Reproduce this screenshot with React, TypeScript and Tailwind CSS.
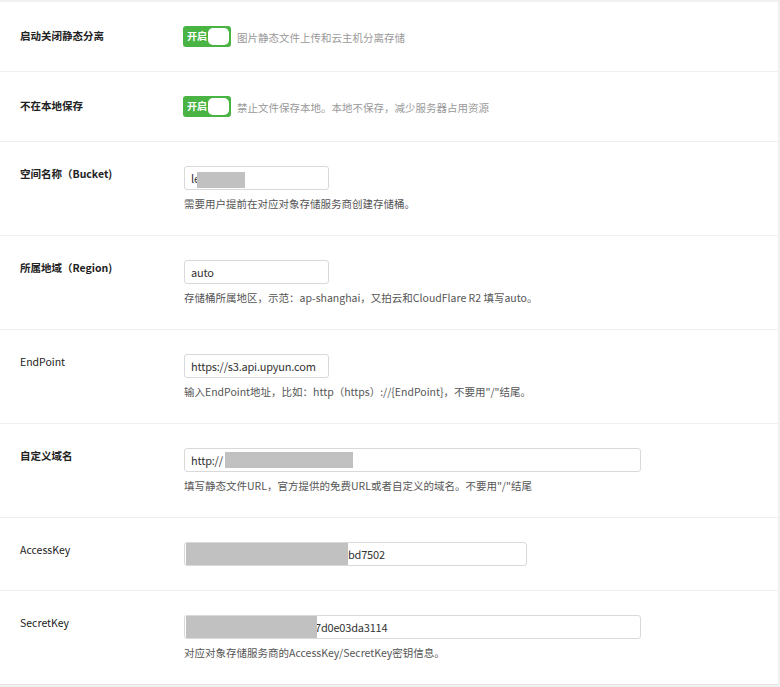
import React from 'react';

const font = { fontFamily: '"Noto Sans CJK SC", "Noto Sans", sans-serif' };

const Toggle = () => (
  <div className="flex items-center w-[48px] h-[21px] rounded-[3px] bg-[#49b443] pl-[4px] pr-[2px]">
    <span className="text-[10px] leading-none font-bold text-white">开启</span>
    <span className="ml-auto w-[21px] h-[17px] rounded-[5px] bg-white" />
  </div>
);

const Field = ({
  width,
  children,
}: {
  width: string;
  children: React.ReactNode;
}) => (
  <div
    className={`relative flex items-center h-[24px] ${width} border border-[#d9d9d9] rounded-[3px] bg-white pl-[6px] text-[11px] tracking-[-0.2px] text-[#333] whitespace-nowrap`}
  >
    {children}
  </div>
);

const Blur = ({ className }: { className: string }) => (
  <span className={`absolute bg-[#c1c1c1] ${className}`} />
);

const SwitchRow = ({ label, help }: { label: string; help: string }) => (
  <div className="flex items-center h-[70px] border-b border-[#f0f0f0] pb-[1px]">
    <div className="w-[183px] pl-[20px] text-[10.5px] font-bold text-[#222]">{label}</div>
    <Toggle />
    <div className="ml-[6px] mt-[3px] text-[10.5px] text-[#999]">{help}</div>
  </div>
);

const InputRow = ({
  label,
  help,
  last,
  plain,
  children,
}: {
  label: string;
  help?: string;
  last?: boolean;
  plain?: boolean;
  children: React.ReactNode;
}) => (
  <div
    className={`flex pt-[24px] ${help ? 'pb-[23px]' : 'pb-[24px]'} ${last ? '' : 'border-b border-[#f0f0f0]'}`}
  >
    <div
      className={`w-[184px] pl-[20px] text-[10.5px] leading-[16px] text-[#222] ${plain ? 'font-normal' : 'font-bold'}`}
    >
      {label}
    </div>
    <div className="flex flex-col">
      {children}
      {help && <div className="mt-[6px] text-[10.5px] leading-[16px] text-[#555]">{help}</div>}
    </div>
  </div>
);

export default function App() {
  return (
    <div className="min-h-[687px] bg-[#f1f1f1] pt-[2px]" style={font}>
      <div className="w-[778px] bg-white border-b border-[#e5e5e5]">
        <SwitchRow label="启动关闭静态分离" help="图片静态文件上传和云主机分离存储" />
        <SwitchRow label="不在本地保存" help="禁止文件保存本地。本地不保存，减少服务器占用资源" />
        <InputRow label="空间名称（Bucket)" help="需要用户提前在对应对象存储服务商创建存储桶。">
          <Field width="w-[145px]">
            le
            <Blur className="left-[12px] top-[5px] w-[48px] h-[16px]" />
          </Field>
        </InputRow>
        <InputRow
          label="所属地域（Region)"
          help="存储桶所属地区，示范：ap-shanghai，又拍云和CloudFlare R2 填写auto。"
        >
          <Field width="w-[145px]">auto</Field>
        </InputRow>
        <InputRow
          label="EndPoint"
          plain
          help="输入EndPoint地址，比如：http（https）://{EndPoint}，不要用&quot;/&quot;结尾。"
        >
          <Field width="w-[145px]">https://s3.api.upyun.com</Field>
        </InputRow>
        <InputRow
          label="自定义域名"
          help="填写静态文件URL，官方提供的免费URL或者自定义的域名。不要用&quot;/&quot;结尾"
        >
          <Field width="w-[457px]">
            http://
            <Blur className="left-[40px] top-[3px] w-[128px] h-[16px]" />
          </Field>
        </InputRow>
        <InputRow label="AccessKey" plain>
          <Field width="w-[343px]">
            <span className="pl-[157px]">bd7502</span>
            <Blur className="left-[1px] top-0 w-[162px] h-[22px]" />
          </Field>
        </InputRow>
        <InputRow label="SecretKey" plain help="对应对象存储服务商的AccessKey/SecretKey密钥信息。" last>
          <Field width="w-[457px]">
            <span className="pl-[124px]">7d0e03da3114</span>
            <Blur className="left-[1px] top-0 w-[131px] h-[22px]" />
          </Field>
        </InputRow>
      </div>
    </div>
  );
}
